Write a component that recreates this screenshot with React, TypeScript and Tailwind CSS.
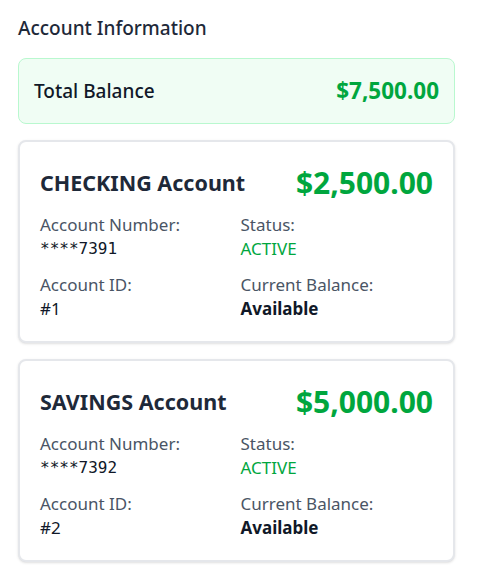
const accounts = [
  { id: 1, type: "CHECKING", number: "****7391", balance: "$2,500.00", status: "ACTIVE" },
  { id: 2, type: "SAVINGS", number: "****7392", balance: "$5,000.00", status: "ACTIVE" },
];

const AccountCard: React.FC<{ account: (typeof accounts)[number] }> = ({ account }) => {
  return (
    <div className="bg-white border-2 border-gray-200 rounded-lg shadow-sm px-5 pt-[23px] pb-[20px]">
      <div className="flex justify-between items-center mb-3">
        <h3 className="text-[21.5px] leading-7 font-bold text-gray-800">{account.type} Account</h3>
        <span className="text-[30px] leading-9 font-bold text-green-600">{account.balance}</span>
      </div>
      <div className="grid grid-cols-2 gap-x-2 gap-y-3 text-[17px]">
        <div>
          <div className="text-gray-600 leading-6">Account Number:</div>
          <div className="text-gray-900 leading-6 font-['DejaVu_Sans_Mono',monospace] text-base">{account.number}</div>
        </div>
        <div>
          <div className="text-gray-600 leading-6">Status:</div>
          <div className="text-green-600 leading-6">{account.status}</div>
        </div>
        <div>
          <div className="text-gray-600 leading-6">Account ID:</div>
          <div className="text-gray-900 leading-6">#{account.id}</div>
        </div>
        <div>
          <div className="text-gray-600 leading-6">Current Balance:</div>
          <div className="text-gray-900 leading-6 font-bold">Available</div>
        </div>
      </div>
    </div>
  );
};

export default function App() {
  return (
    <div className="min-h-screen bg-white pl-[18px] pr-[29px] pt-[14px] font-['Noto_Sans',sans-serif]">
      <h2 className="text-[19px] leading-7 font-medium text-gray-800 mb-4">Account Information</h2>

      <div className="flex justify-between items-center bg-green-50 border border-green-200 rounded-lg px-[15px] h-[66px] mb-4">
        <span className="text-[19px] font-medium text-gray-900">Total Balance</span>
        <span className="text-[22.5px] font-bold text-green-600">$7,500.00</span>
      </div>

      <div className="flex flex-col gap-4">
        {accounts.map((a) => (
          <AccountCard key={a.id} account={a} />
        ))}
      </div>
    </div>
  );
}
